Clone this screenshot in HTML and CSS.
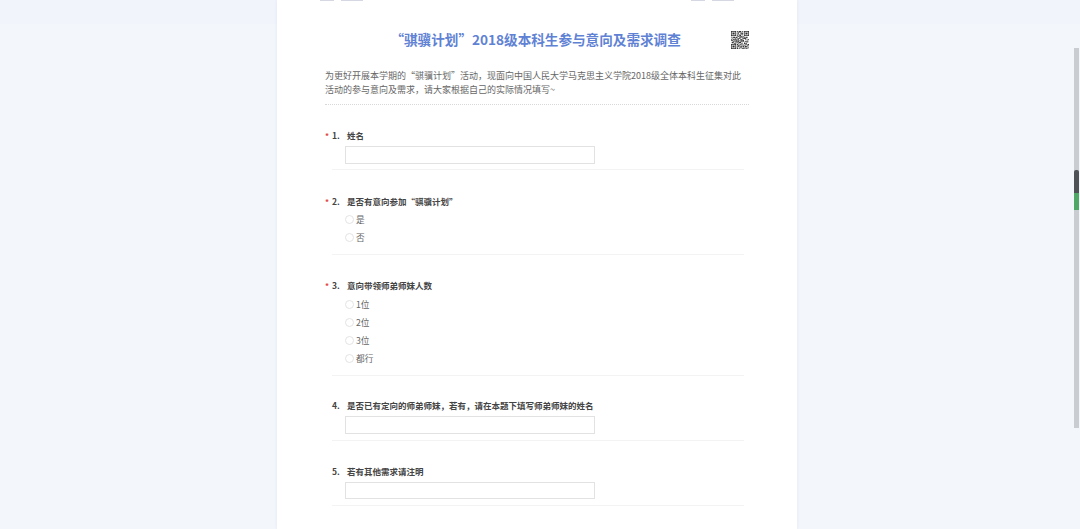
FILE: index.html
```html
<!DOCTYPE html>
<html lang="zh-CN">
<head>
<meta charset="utf-8">
<title>调查</title>
<link rel="stylesheet" href="styles.css">
</head>
<body>
<main class="card">
  <div class="top-strip">
    <div class="top-marks"><i class="mark mark-s"></i><i class="mark"></i></div>
    <div class="top-marks"><i class="mark mark-s"></i><i class="mark"></i></div>
  </div>
  <header class="head">
    <span class="head-side"></span>
    <h1 class="title">“骐骥计划”2018级本科生参与意向及需求调查</h1>
    <span class="head-side head-qr">
      <svg class="qr" viewBox="0 0 25 25" shape-rendering="geometricPrecision" aria-label="二维码">
        <path fill="#2c2c2c" d="M0 0h7v7H0zM18 0h7v7h-7zM0 18h7v7H0z"/>
        <path fill="#fff" d="M1 1h5v5H1zM19 1h5v5h-5zM1 19h5v5H1z"/>
        <path fill="#2c2c2c" d="M2 2h3v3H2zM20 2h3v3h-3zM2 20h3v3H2z"/>
        <path fill="#333" d="M8 0h2v1H8zM11 0h3v2h-3zM15 0h2v1h-2zM8 2h1v2H8zM10 2h1v3h-1zM13 3h3v1h-3zM16 2h1v2h-1zM8 5h2v1H8zM12 5h2v2h-2zM15 5h2v1h-2zM9 7h3v1H9zM15 7h1v2h-1zM0 8h2v1H0zM3 8h3v2H3zM7 8h2v2H7zM11 9h3v1h-3zM17 8h3v1h-3zM21 8h2v2h-2zM1 10h1v2H1zM5 11h3v1H5zM9 10h2v2H9zM13 11h2v2h-2zM16 10h3v1h-3zM20 11h1v2h-1zM23 11h2v1h-2zM0 13h3v1H0zM4 13h1v2H4zM6 13h3v2H6zM10 13h2v1h-2zM16 12h2v3h-2zM19 14h3v1h-3zM23 13h1v3h-1zM1 15h2v2H1zM7 16h3v1H7zM11 15h3v2h-3zM15 16h1v2h-1zM18 16h2v2h-2zM21 16h1v3h-1zM8 18h2v2H8zM12 18h2v1h-2zM17 19h3v1h-3zM23 18h2v2h-2zM9 21h3v1H9zM13 20h2v3h-2zM16 21h2v2h-2zM19 21h3v2h-3zM23 21h1v2h-1zM8 23h2v2H8zM11 23h1v2h-1zM15 24h4v1h-4zM20 24h3v1h-3z"/>
        <path fill="#444" d="M9 1h2v1H9zM14 2h2v1h-2zM11 5h1v2h-1zM14 4h2v1h-2zM8 6h2v1H8zM13 7h2v1h-2zM17 7h1v1h-1zM2 9h1v1H2zM6 9h1v2H6zM12 8h3v1h-3zM15 9h2v1h-2zM18 9h3v2h-3zM0 11h1v2H0zM3 11h2v2H3zM11 10h2v1h-2zM8 12h3v1H8zM15 11h1v2h-1zM21 12h2v1h-2zM13 13h3v2h-3zM3 14h1v3H3zM9 14h2v2H9zM22 14h1v2h-1zM5 15h2v1H5zM4 17h3v1H4zM10 17h1v1h-1zM14 17h1v2h-1zM16 18h1v3h-1zM20 17h1v3h-1zM10 19h2v2h-2zM22 19h1v2h-1zM8 21h1v2H8zM12 23h3v1h-3zM18 23h1v1h-1zM23 23h2v1h-2z"/>
      </svg>
    </span>
  </header>
  <p class="intro">为更好开展本学期的“骐骥计划”活动，现面向中国人民大学马克思主义学院2018级全体本科生征集对此活动的参与意向及需求，请大家根据自己的实际情况填写~</p>

  <section class="q q-first">
    <div class="q-label"><span class="star">*</span><span class="num">1.</span><span class="q-text">姓名</span></div>
    <div class="field"></div>
  </section>

  <section class="q q-radio">
    <div class="q-label"><span class="star">*</span><span class="num">2.</span><span class="q-text">是否有意向参加“骐骥计划”</span></div>
    <div class="opts">
      <div class="opt"><i class="radio"></i>是</div>
      <div class="opt"><i class="radio"></i>否</div>
    </div>
  </section>

  <section class="q q-radio q-three">
    <div class="q-label"><span class="star">*</span><span class="num">3.</span><span class="q-text">意向带领师弟师妹人数</span></div>
    <div class="opts opts-b">
      <div class="opt"><i class="radio"></i>1位</div>
      <div class="opt"><i class="radio"></i>2位</div>
      <div class="opt"><i class="radio"></i>3位</div>
      <div class="opt"><i class="radio"></i>都行</div>
    </div>
  </section>

  <section class="q q-four">
    <div class="q-label"><span class="star"></span><span class="num">4.</span><span class="q-text">是否已有定向的师弟师妹，若有，请在本题下填写师弟师妹的姓名</span></div>
    <div class="field"></div>
  </section>

  <section class="q q-five">
    <div class="q-label"><span class="star"></span><span class="num">5.</span><span class="q-text">若有其他需求请注明</span></div>
    <div class="field"></div>
  </section>
</main>

<div class="scrollbar" aria-hidden="true">
  <div class="scroll-dark"></div>
  <div class="scroll-green"></div>
</div>
</body>
</html>
```

FILE: styles.css
```css
* { box-sizing: border-box; }

html, body {
  margin: 0;
  height: 100%;
  overflow: hidden;
}

body {
  background: linear-gradient(#f1f4fb 0, #f1f4fb 24px, #f3f6fb 24px);
  font-family: "Noto Sans CJK SC", "Liberation Sans", sans-serif;
  color: #555;
  position: relative;
}

.card {
  width: 520px;
  height: 529px;
  margin-left: 277px;
  padding: 0 48px;
  background: #fff;
  box-shadow: 0 0 3px rgba(190, 200, 220, .3);
  overflow: hidden;
}

.top-strip {
  display: flex;
  justify-content: space-between;
  height: 1px;
  margin: 0 15px 0 -5px;
}

.top-marks { display: flex; gap: 7px; }

.mark {
  display: block;
  width: 22px;
  height: 1px;
  background: #d5d8e2;
}

.mark-s { width: 14px; }

.head {
  display: grid;
  grid-template-columns: 1fr auto 1fr;
  align-items: center;
  height: 39px;
  margin-top: 18px;
}

.title {
  margin: 0 0 0 4px;
  font-size: 13.6px;
  line-height: 20px;
  font-weight: 700;
  color: #5f82d4;
  white-space: nowrap;
  text-spacing-trim: trim-start;
}

.head-qr {
  display: flex;
  justify-content: flex-end;
  padding-top: 2px;
}

.qr { width: 18px; height: 18px; display: block; }

.intro {
  margin: 11px 0 0;
  padding-bottom: 7px;
  height: 36px;
  font-size: 9px;
  line-height: 14px;
  color: #666;
  border-bottom: 1px dotted #d8d8d8;
}

.q {
  margin: 24px 5px 0 7px;
  padding-bottom: 5px;
  border-bottom: 1px solid #f3f3f3;
}

.q-first { margin-top: 23px; }

.q-radio { padding-bottom: 8px; }

.q-three { margin-top: 23px; }

.q-four { margin-top: 22px; padding-bottom: 6px; }

.q-five { margin-top: 23px; padding-bottom: 6px; }

.q-label {
  display: flex;
  align-items: center;
  height: 14px;
  margin-left: -7px;
  font-size: 8.5px;
  font-weight: 700;
  color: #444;
  white-space: nowrap;
}

.star {
  width: 7px;
  color: #e0443e;
  font-size: 8px;
}

.num { width: 15px; }

.field {
  width: 250px;
  height: 18px;
  margin: 4px 0 0 13px;
  background: #fff;
  border: 1px solid #e2e2e2;
}

.q-five .field { height: 17px; }

.opts { margin: 2px 0 0 13px; }

.opts-b { margin-top: 3px; }

.opt {
  display: flex;
  align-items: center;
  height: 18px;
  font-size: 8.7px;
  color: #666;
}

.radio {
  width: 9px;
  height: 9px;
  margin-right: 2px;
  border: 1px solid #e4e4e4;
  border-radius: 50%;
  background: #fff;
}

.scrollbar {
  position: absolute;
  top: 48px;
  right: 1px;
  width: 5px;
  height: 380px;
  background: #c9ccd0;
}

.scroll-dark {
  height: 23px;
  margin-top: 122px;
  border-radius: 2px 2px 0 0;
  background: #4e5256;
}

.scroll-green {
  height: 17px;
  background: #4fa866;
}
```
